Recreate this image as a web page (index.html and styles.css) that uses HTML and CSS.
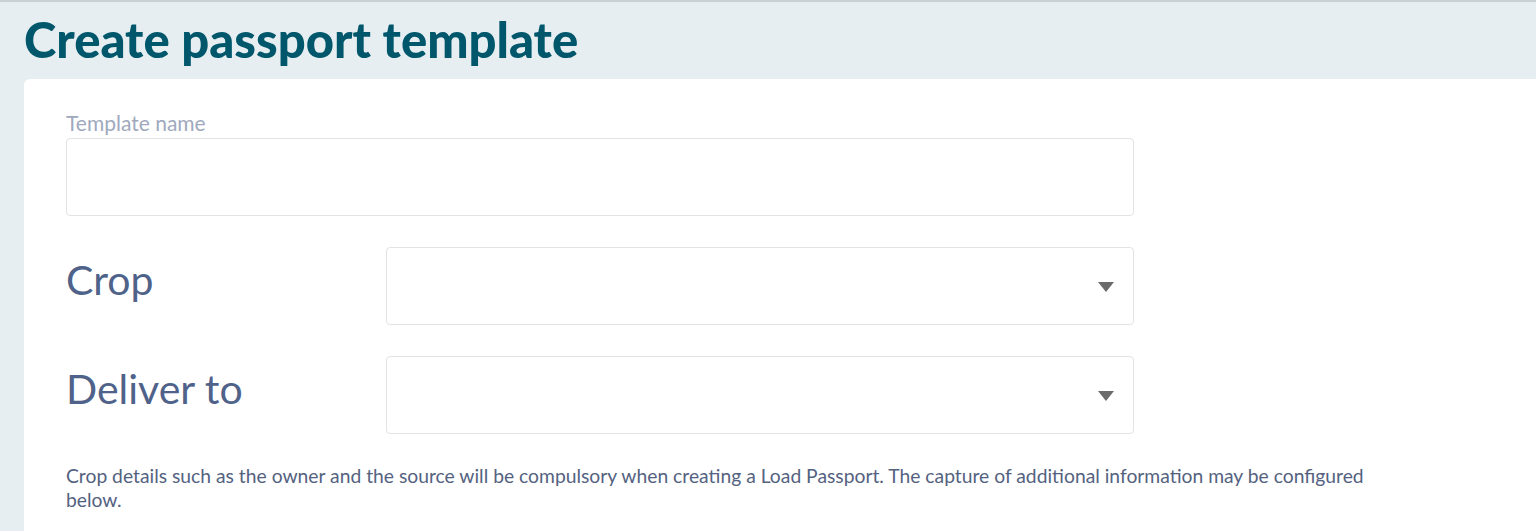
FILE: index.html
```html
<!DOCTYPE html>
<html lang="en">
<head>
<meta charset="utf-8">
<title>Create passport template</title>
<link rel="stylesheet" href="styles.css">
</head>
<body>
<div class="page">
  <h1 class="page-title">Create passport template</h1>
  <div class="card">
    <div class="field">
      <label class="field-label" for="tname">Template name</label>
      <input class="text-input" id="tname" type="text">
    </div>
    <div class="row">
      <div class="row-label">Crop</div>
      <div class="select">
        <svg class="caret" width="16" height="10" viewBox="0 0 16 10"><path d="M0 0 H16 L8 10 Z" fill="#6b6b6b"/></svg>
      </div>
    </div>
    <div class="row">
      <div class="row-label">Deliver to</div>
      <div class="select">
        <svg class="caret" width="16" height="10" viewBox="0 0 16 10"><path d="M0 0 H16 L8 10 Z" fill="#6b6b6b"/></svg>
      </div>
    </div>
    <p class="note">Crop details such as the owner and the source will be compulsory when creating a Load Passport. The capture of additional information may be configured below.</p>
  </div>
</div>
</body>
</html>
```
FILE: styles.css
```css
html, body {
  margin: 0;
  padding: 0;
  background: #e6eef1;
  font-family: Lato, "Open Sans", sans-serif;
  overflow: hidden;
}
.page {
  border-top: 2px solid #c8d2d6;
  padding-left: 24px;
  min-height: 529px;
}
.page-title {
  margin: 0;
  padding-top: 9px;
  height: 68px;
  font-size: 49px;
  font-weight: 900;
  color: #00576b;
  line-height: 56px;
  letter-spacing: 0;
}
.card {
  background: #ffffff;
  border-top-left-radius: 6px;
  padding: 31px 42px 20px 42px;
  min-height: 460px;
  box-sizing: border-box;
}
.field {
  display: flex;
  flex-direction: column;
  width: 1068px;
}
.field-label {
  font-size: 21px;
  color: #9fa9be;
  line-height: 26px;
  margin-bottom: 2px;
}
.text-input {
  height: 78px;
  box-sizing: border-box;
  border: 1px solid #e3e3e3;
  border-radius: 4px;
  outline: none;
  margin: 0;
}
.row {
  display: flex;
  align-items: center;
  margin-top: 31px;
  width: 1068px;
}
.row-label {
  width: 320px;
  font-size: 41px;
  color: #4f6289;
  line-height: 48px;
  padding-bottom: 12px;
}
.select {
  flex: 1;
  height: 78px;
  box-sizing: border-box;
  border: 1px solid #e3e3e3;
  border-radius: 4px;
  display: flex;
  align-items: center;
  justify-content: flex-end;
  padding-right: 19px;
}
.caret {
  display: block;
  margin-top: 2px;
}
.note {
  margin: 30px 0 0 0;
  max-width: 1320px;
  font-size: 19.3px;
  line-height: 24px;
  color: #54627f;
}
```
